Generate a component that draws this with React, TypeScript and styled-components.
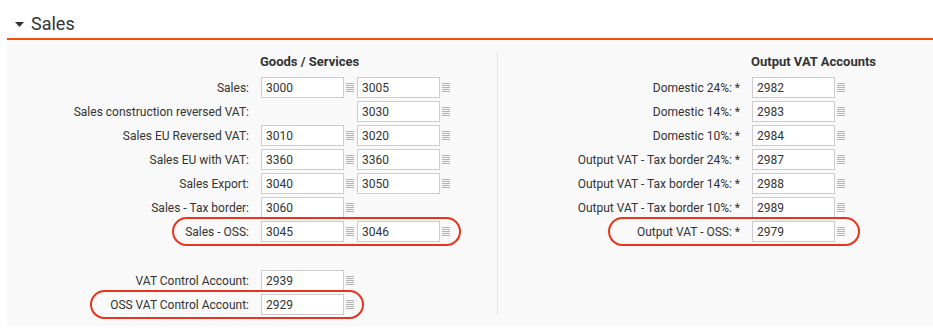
import React from "react";
import styled, { createGlobalStyle } from "styled-components";

const GlobalStyle = createGlobalStyle`
  html, body {
    margin: 0;
    padding: 0;
    background: #ffffff;
    font-family: Roboto, "Liberation Sans", Arial, sans-serif;
    color: #333333;
  }
`;

type Row = {
  label: string;
  fields: (string | null)[];
  mark?: { left: number; width: number };
};

const goodsRows: Row[] = [
  { label: "Sales:", fields: ["3000", "3005"] },
  { label: "Sales construction reversed VAT:", fields: [null, "3030"] },
  { label: "Sales EU Reversed VAT:", fields: ["3010", "3020"] },
  { label: "Sales EU with VAT:", fields: ["3360", "3360"] },
  { label: "Sales Export:", fields: ["3040", "3050"] },
  { label: "Sales - Tax border:", fields: ["3060"] },
  { label: "Sales - OSS:", fields: ["3045", "3046"], mark: { left: 165, width: 289 } },
];

const controlRows: Row[] = [
  { label: "VAT Control Account:", fields: ["2939"] },
  { label: "OSS VAT Control Account:", fields: ["2929"], mark: { left: 83, width: 274 } },
];

const vatRows: Row[] = [
  { label: "Domestic 24%: *", fields: ["2982"] },
  { label: "Domestic 14%: *", fields: ["2983"] },
  { label: "Domestic 10%: *", fields: ["2984"] },
  { label: "Output VAT - Tax border 24%: *", fields: ["2987"] },
  { label: "Output VAT - Tax border 14%: *", fields: ["2988"] },
  { label: "Output VAT - Tax border 10%: *", fields: ["2989"] },
  { label: "Output VAT - OSS: *", fields: ["2979"], mark: { left: 110, width: 252 } },
];

const Page = styled.div`
  width: 933px;
`;

const SectionHeading = styled.div`
  margin-left: 7px;
  padding: 13px 0 3px 8px;
  display: flex;
  align-items: center;
  gap: 7px;
  font-size: 18px;
  line-height: 22px;
  color: #333333;
  border-bottom: 2px solid #fb4a0c;
`;

const Caret = styled.svg`
  width: 9px;
  height: 5px;
  flex-shrink: 0;
`;

const Panel = styled.div`
  margin-left: 7px;
  background: #f9f9f9;
  padding: 11px 0;
  display: grid;
  grid-template-columns: 490px 1fr;
`;

const Column = styled.div<{ $divided?: boolean }>`
  display: flex;
  flex-direction: column;
  gap: 3px;
  border-left: ${(p) => (p.$divided ? "1px solid #e6e6e6" : "none")};
`;

const ColumnTitle = styled.div`
  padding: 3px 0 4px 253px;
  font-size: 13px;
  line-height: 16px;
  font-weight: 700;
  color: #333333;
`;

const FormRow = styled.div`
  position: relative;
  display: flex;
  align-items: center;
  height: 21px;
`;

const Label = styled.label`
  width: 242px;
  flex-shrink: 0;
  text-align: right;
  white-space: nowrap;
  font-size: 12px;
  color: #333333;
  margin-right: 12px;
`;

const Field = styled.div`
  display: flex;
  align-items: center;
  width: 96px;
  flex-shrink: 0;
`;

const AccountInput = styled.input`
  box-sizing: border-box;
  width: 83px;
  height: 21px;
  padding: 0 4px;
  border: 1px solid #cccccc;
  border-radius: 0;
  background: #ffffff;
  font-family: Roboto, "Liberation Sans", Arial, sans-serif;
  font-size: 12px;
  color: #333333;
  outline: none;
`;

const ListIcon = styled.svg`
  width: 8px;
  height: 9px;
  margin-left: 2px;
`;

const Spacer = styled.div`
  height: 22px;
`;

const Highlight = styled.div`
  position: absolute;
  top: -4px;
  height: 29px;
  box-sizing: border-box;
  border: 2px solid #e9331c;
  border-radius: 15px;
  pointer-events: none;
`;

const Lookup = () => (
  <ListIcon viewBox="0 0 8 9">
    {[0, 2, 4, 6, 8].map((y) => (
      <rect key={y} x="0" y={y} width="8" height="1" fill="#b3b3b3" />
    ))}
  </ListIcon>
);

const Rows: React.FC<{ rows: Row[] }> = ({ rows }) => (
  <>
    {rows.map((row) => (
      <FormRow key={row.label}>
        <Label>{row.label}</Label>
        {row.fields.map((value, i) => (
          <Field key={i}>
            {value !== null && (
              <>
                <AccountInput defaultValue={value} />
                <Lookup />
              </>
            )}
          </Field>
        ))}
        {row.mark && (
          <Highlight style={{ left: row.mark.left, width: row.mark.width }} />
        )}
      </FormRow>
    ))}
  </>
);

export default function App() {
  return (
    <Page>
      <GlobalStyle />
      <SectionHeading>
        <Caret viewBox="0 0 9 5">
          <polygon points="0,0 9,0 4.5,5" fill="#333333" />
        </Caret>
        Sales
      </SectionHeading>
      <Panel>
        <Column>
          <ColumnTitle>Goods / Services</ColumnTitle>
          <Rows rows={goodsRows} />
          <Spacer />
          <Rows rows={controlRows} />
        </Column>
        <Column $divided>
          <ColumnTitle>Output VAT Accounts</ColumnTitle>
          <Rows rows={vatRows} />
        </Column>
      </Panel>
    </Page>
  );
}
